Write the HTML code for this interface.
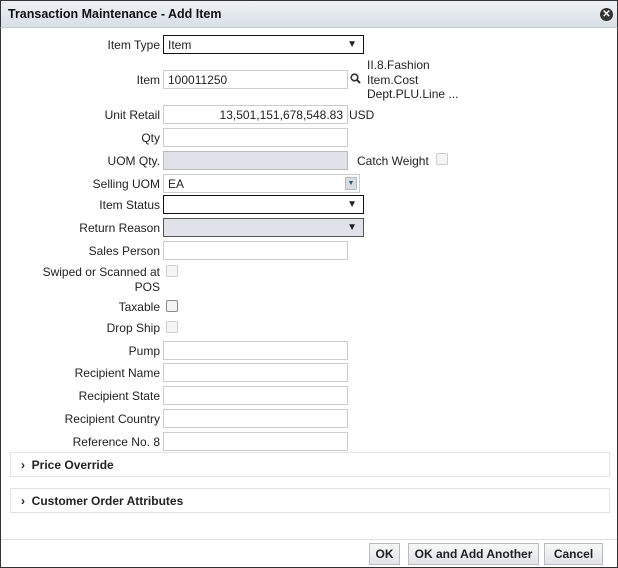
<!DOCTYPE html>
<html><head><style>
*{box-sizing:border-box}
body{margin:0;width:618px;height:568px;background:#fff;font-family:"Liberation Sans",sans-serif;font-size:12px;color:#222;position:relative;overflow:hidden}
.frame{position:absolute;left:0;top:0;width:618px;height:568px;border:1px solid #333;border-top:none}
.title{position:absolute;left:0;top:0;width:618px;height:28px;background:linear-gradient(#eef2f5,#d8dfe6);border:1px solid #333;border-bottom:1px solid #c4ccd4;font-weight:bold;font-size:12.5px;padding:6px 0 0 7px;color:#111}
.close{position:absolute;right:4px;top:7px;width:13px;height:13px;border-radius:50%;background:#333;color:#fff;font-size:10px;line-height:13px;text-align:center;font-weight:bold}
.l{position:absolute;right:458px;text-align:right;white-space:nowrap;color:#222}
.i{position:absolute;left:163px;width:185px;height:19px;border:1px solid #c9cdd2;background:#fff;padding:2px 4px;font-size:12px}
.g{background:#dfe2e8;border-color:#bbb}
.s{border:1px solid #111;width:201px}
.s:after{content:"▼";position:absolute;right:6px;top:4px;font-size:10px;line-height:10px}
.cb{position:absolute;width:12px;height:12px;border:1px solid #ccc;border-radius:2px;background:#f4f4f4}
.panel{position:absolute;left:10px;width:600px;height:25px;border:1px solid #e2e2e2;font-weight:bold;padding:5px 0 0 10px;font-size:12px}
.btn{position:absolute;top:543px;height:22px;border:1px solid #b8bcc2;background:linear-gradient(#f7f7f7,#e2e4e7);font-weight:bold;font-size:12px;text-align:center;line-height:20px;color:#222}
</style></head><body>
<div class="frame"></div>
<div class="title">Transaction Maintenance - Add Item<div class="close">✕</div></div>

<div class="l" style="top:38px">Item Type</div><div class="i s" style="top:35px">Item</div>
<div class="l" style="top:73px">Item</div><div class="i" style="top:70px">100011250</div>
<svg style="position:absolute;left:350px;top:73px" width="11" height="11"><circle cx="4.5" cy="4.5" r="3.3" fill="none" stroke="#333" stroke-width="1.6"/><line x1="7" y1="7" x2="10" y2="10" stroke="#333" stroke-width="2"/></svg>
<div style="position:absolute;left:367px;top:58px;line-height:14.5px">II.8.Fashion<br>Item.Cost<br>Dept.PLU.Line ...</div>
<div class="l" style="top:108px">Unit Retail</div><div class="i" style="top:105px;text-align:right">13,501,151,678,548.83</div><div style="position:absolute;left:349px;top:108px">USD</div>
<div class="l" style="top:131px">Qty</div><div class="i" style="top:128px"></div>
<div class="l" style="top:154px">UOM Qty.</div><div class="i g" style="top:151px"></div>
<div style="position:absolute;left:357px;top:154px">Catch Weight</div><div class="cb" style="left:436px;top:153px"></div>
<div class="l" style="top:177px">Selling UOM</div><div class="i" style="top:174px;width:197px">EA<div style="position:absolute;right:2px;top:2px;width:12px;height:13px;background:#d8dde3;border:1px solid #bbb;font-size:7px;text-align:center;line-height:12px;color:#2a5a6a">▼</div></div>
<div class="l" style="top:198px">Item Status</div><div class="i s" style="top:195px"></div>
<div class="l" style="top:221px">Return Reason</div><div class="i s g" style="top:218px;border-color:#555"></div>
<div class="l" style="top:244px">Sales Person</div><div class="i" style="top:241px"></div>
<div class="l" style="top:265px;line-height:14.5px">Swiped or Scanned at<br>POS</div><div class="cb" style="left:166px;top:265px"></div>
<div class="l" style="top:300px">Taxable</div><div class="cb" style="left:166px;top:300px;border-color:#888"></div>
<div class="l" style="top:321px">Drop Ship</div><div class="cb" style="left:166px;top:321px"></div>
<div class="l" style="top:344px">Pump</div><div class="i" style="top:341px"></div>
<div class="l" style="top:366px">Recipient Name</div><div class="i" style="top:363px"></div>
<div class="l" style="top:389px">Recipient State</div><div class="i" style="top:386px"></div>
<div class="l" style="top:412px">Recipient Country</div><div class="i" style="top:409px"></div>
<div class="l" style="top:435px">Reference No. 8</div><div class="i" style="top:432px"></div>

<div class="panel" style="top:452px">›&nbsp;&nbsp;Price Override</div>
<div class="panel" style="top:488px">›&nbsp;&nbsp;Customer Order Attributes</div>
<div style="position:absolute;left:1px;top:539px;width:616px;height:1px;background:#ddd"></div>
<div class="btn" style="left:369px;width:31px">OK</div>
<div class="btn" style="left:408px;width:131px">OK and Add Another</div>
<div class="btn" style="left:544px;width:59px">Cancel</div>
</body></html>
